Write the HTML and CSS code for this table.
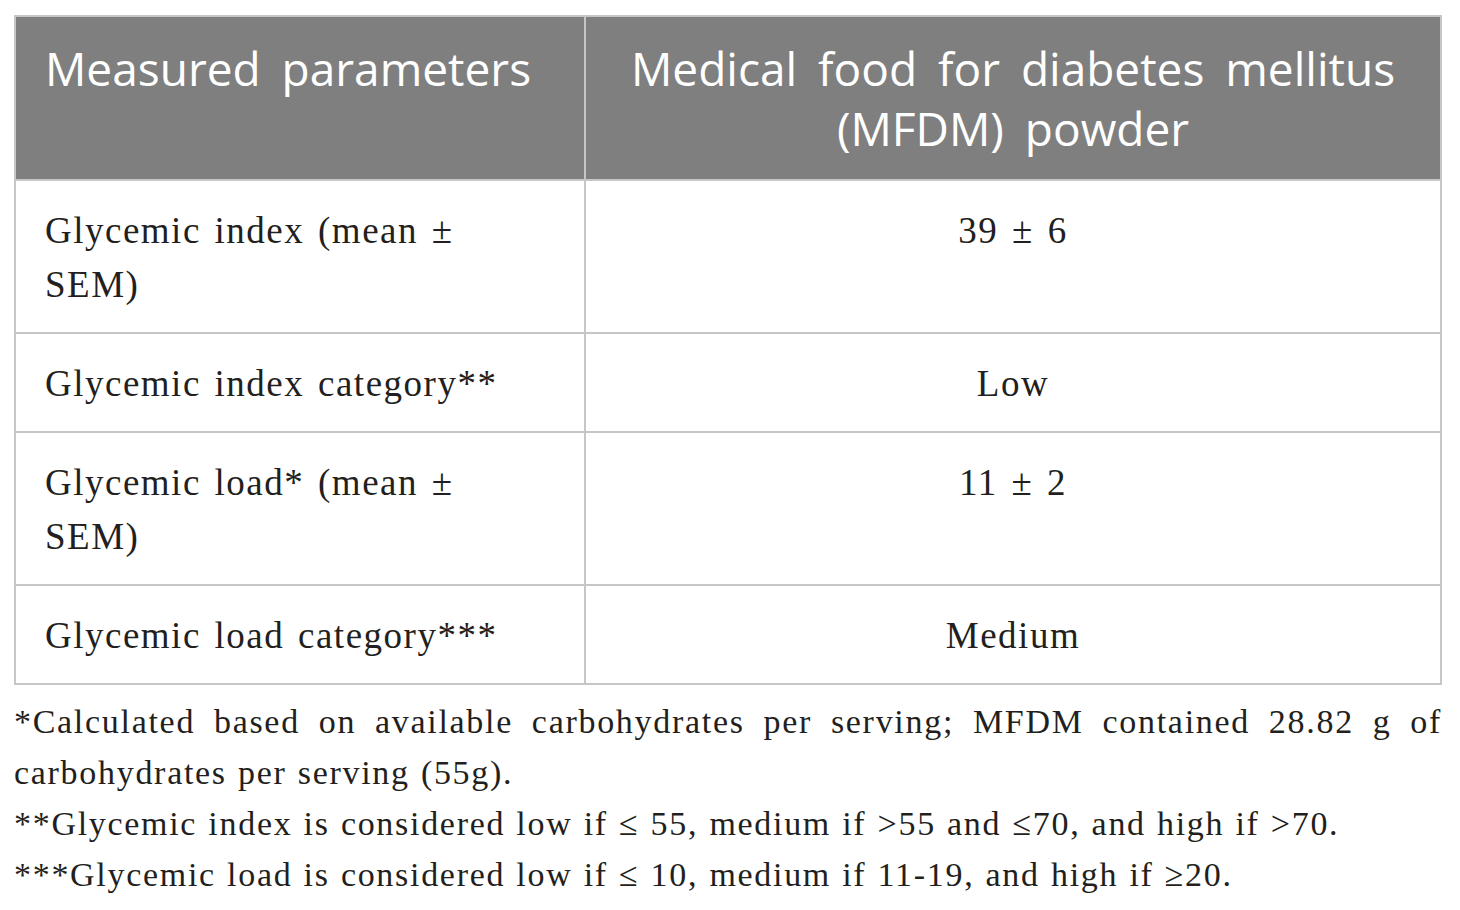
FILE: index.html
```html
<!DOCTYPE html>
<html lang="en">

<head>
    <meta charset="UTF-8">
    <meta name="viewport" content="width=device-width, initial-scale=1.0">
    <title>Glycemic index and load of MFDM</title>
    <link rel="stylesheet" href="styles.css">
</head>

<body>
    <div id="table-wrap">
        <table id="gi-table">
            <thead>
                <tr>
                    <th class="col-param">Measured parameters</th>
                    <th class="col-value">Medical food for diabetes mellitus (MFDM) powder</th>
                </tr>
            </thead>
            <tbody>
                <tr>
                    <td class="col-param">Glycemic index (mean ± SEM)</td>
                    <td class="col-value">39 ± 6</td>
                </tr>
                <tr>
                    <td class="col-param">Glycemic index category**</td>
                    <td class="col-value">Low</td>
                </tr>
                <tr>
                    <td class="col-param">Glycemic load* (mean ± SEM)</td>
                    <td class="col-value">11 ± 2</td>
                </tr>
                <tr>
                    <td class="col-param">Glycemic load category***</td>
                    <td class="col-value">Medium</td>
                </tr>
            </tbody>
        </table>
        <div id="notes">
            <p class="note justify">*Calculated based on available carbohydrates per serving; MFDM contained 28.82 g of carbohydrates per serving (55g).</p>
            <p class="note">**Glycemic index is considered low if ≤ 55, medium if &gt;55 and ≤70, and high if &gt;70.</p>
            <p class="note">***Glycemic load is considered low if ≤ 10, medium if 11-19, and high if ≥20.</p>
        </div>
    </div>
</body>

</html>
```

FILE: styles.css
```css
body {
    margin: 0;
    background-color: #fff;
    font-family: "Liberation Serif", "Times New Roman", serif;
    color: #231f20;
}

#table-wrap {
    width: 1428px;
    padding: 15px 0 0 14px;
}

#gi-table {
    width: 100%;
    border-collapse: collapse;
    border: 2px solid #c6c6c6;
}

#gi-table th,
#gi-table td {
    border: 2px solid #c6c6c6;
    vertical-align: top;
    padding-left: 29px;
    padding-right: 29px;
}

#gi-table th {
    background-color: #7f7f7f;
    color: #fff;
    font-family: "Open Sans", "Noto Sans", sans-serif;
    font-weight: normal;
    font-size: 46px;
    line-height: 60px;
    word-spacing: 9px;
    padding-top: 21px;
    padding-bottom: 21px;
}

#gi-table td {
    font-size: 37px;
    line-height: 54px;
    letter-spacing: 1.5px;
    word-spacing: 3px;
    padding-top: 23px;
    padding-bottom: 20px;
}

#gi-table .col-param {
    width: 499px;
    padding-right: 40px;
    text-align: left;
}

.col-value {
    text-align: center;
}

#notes {
    margin-top: 11px;
}

.note {
    margin: 0;
    font-size: 34px;
    line-height: 51px;
    letter-spacing: 1.7px;
    word-spacing: 1px;
}

.justify {
    text-align: justify;
}
```
